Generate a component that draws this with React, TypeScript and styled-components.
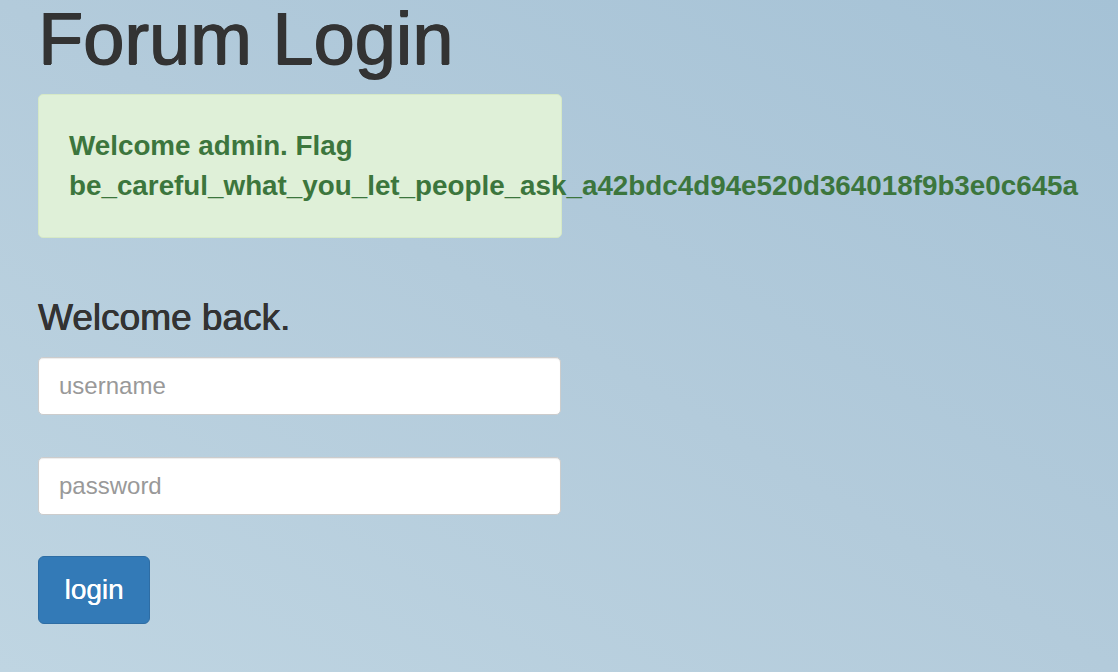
import * as React from 'react';
import styled, { createGlobalStyle } from 'styled-components';

const GlobalStyle = createGlobalStyle`
	html, body {
		margin: 0;
		padding: 0;
		height: 100%;
	}
	body {
		font-family: 'Liberation Sans', Arial, Helvetica, sans-serif;
		background: linear-gradient(to bottom left, #a5c2d6 0%, #b3cbdb 50%, #bfd5e2 100%);
		color: #333;
		min-height: 672px;
	}
`;

const App = () => {
	return (
		<>
			<GlobalStyle />
			<Page>
				<Title>Forum Login</Title>
				<Alert>
					Welcome admin. Flag be_careful_what_you_let_people_ask_a42bdc4d94e520d364018f9b3e0c645a
				</Alert>
				<Form onSubmit={e => e.preventDefault()}>
					<Subtitle>Welcome back.</Subtitle>
					<Input type="text" placeholder="username" />
					<Input type="password" placeholder="password" />
					<Button type="submit">login</Button>
				</Form>
			</Page>
		</>
	);
};

export default App;

const Page = styled.div`
	padding: 0 38px;
	width: 524px;
	display: flex;
	flex-direction: column;
`;

const Title = styled.h1`
	margin: 0;
	font-size: 74px;
	line-height: 77px;
	font-weight: 400;
	color: #333;
	text-shadow: 0.8px 0 0 #333, -0.6px 0 0 #333, 0 0.6px 0 #333;
	white-space: nowrap;
`;

const Alert = styled.div`
	margin-top: 17px;
	box-sizing: border-box;
	width: 524px;
	padding: 31px 30px;
	background: #dff0d8;
	border: 1px solid #d6e9c6;
	border-radius: 5px;
	color: #3c763d;
	font-size: 27.8px;
	line-height: 40px;
	font-weight: 700;
	white-space: normal;
`;

const Form = styled.form`
	margin-top: 60px;
	display: flex;
	flex-direction: column;
	align-items: flex-start;
`;

const Subtitle = styled.h3`
	margin: 0 0 19px;
	font-size: 37px;
	line-height: 40px;
	font-weight: 400;
	color: #333;
	text-shadow: 0.5px 0 0 #333, -0.3px 0 0 #333;
`;

const Input = styled.input`
	box-sizing: border-box;
	width: 523px;
	height: 58px;
	margin: 0 0 42px;
	padding: 0 20px;
	font-family: inherit;
	font-size: 24px;
	color: #555;
	background: #fff;
	border: 1px solid #ccc;
	border-radius: 5px;
	box-shadow: inset 0 1px 1px rgba(0, 0, 0, 0.075);
	outline: none;

	&::placeholder {
		color: #999;
	}
`;

const Button = styled.button`
	margin-top: -1px;
	box-sizing: border-box;
	width: 112px;
	height: 68px;
	padding: 0;
	font-family: inherit;
	font-size: 28px;
	color: #fff;
	background: #337ab7;
	border: 1px solid #2e6da4;
	border-radius: 6px;
	cursor: pointer;
	text-shadow: 0.3px 0 0 #fff;
`;
